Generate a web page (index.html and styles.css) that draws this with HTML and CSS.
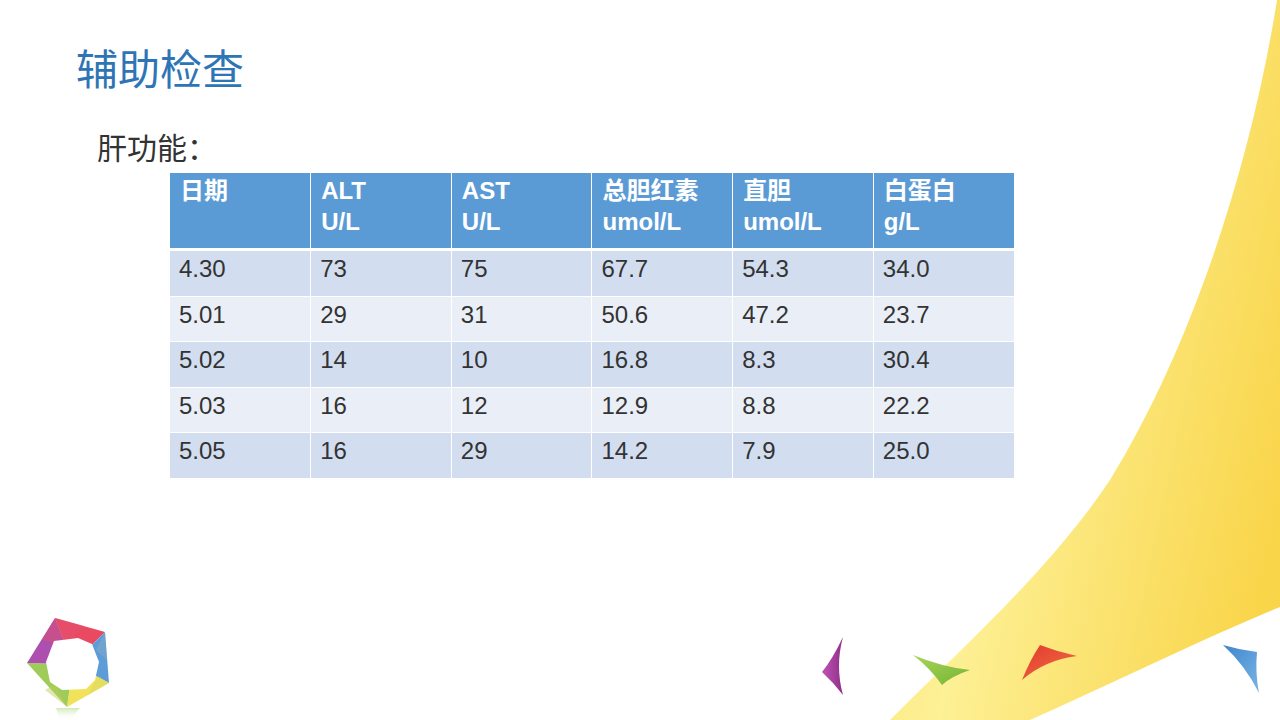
FILE: index.html
```html
<!DOCTYPE html>
<html lang="zh-CN">
<head>
<meta charset="utf-8">
<title>辅助检查</title>
<link rel="stylesheet" href="styles.css">
</head>
<body>
<div class="slide">
  <svg class="deco" width="1280" height="720" viewBox="0 0 1280 720" aria-hidden="true">
    <defs>
      <linearGradient id="sun" x1="0" y1="0.3" x2="1" y2="0.7">
        <stop offset="0" stop-color="#fbe777"/>
        <stop offset="0.35" stop-color="#fdf095"/>
        <stop offset="1" stop-color="#f9d54a"/>
      </linearGradient>
      <linearGradient id="purp" x1="0" y1="0" x2="1" y2="0">
        <stop offset="0" stop-color="#c054b4"/>
        <stop offset="1" stop-color="#8e2f8a"/>
      </linearGradient>
      <linearGradient id="grn" x1="0" y1="0" x2="1" y2="1">
        <stop offset="0" stop-color="#a8d45a"/>
        <stop offset="1" stop-color="#76b534"/>
      </linearGradient>
      <linearGradient id="red" x1="0" y1="0" x2="1" y2="1">
        <stop offset="0" stop-color="#e23a2a"/>
        <stop offset="1" stop-color="#f0704a"/>
      </linearGradient>
      <linearGradient id="blu" x1="0" y1="0" x2="1" y2="1">
        <stop offset="0" stop-color="#3f86cc"/>
        <stop offset="1" stop-color="#7ab4e6"/>
      </linearGradient>
      <linearGradient id="refl" x1="0" y1="0" x2="0" y2="1">
        <stop offset="0" stop-color="#b5d98a" stop-opacity="0.6"/>
        <stop offset="1" stop-color="#ffffff" stop-opacity="0"/>
      </linearGradient>
      <filter id="soft" x="-10%" y="-10%" width="120%" height="120%">
        <feGaussianBlur stdDeviation="0.6"/>
      </filter>
    </defs>
    <path d="M1277,0 C1250,170 1190,350 1110,480 C1050,570 960,650 890,720 L1030,720 C1120,680 1200,640 1280,607 L1280,0 Z" fill="url(#sun)"/>
    <path d="M843,637 Q832,660 822,672 Q833,682 843,695 Q835,666 843,637 Z" fill="url(#purp)"/>
    <path d="M913,655 Q942,667 970,670 Q952,676 942,685 Q930,668 913,655 Z" fill="url(#grn)"/>
    <path d="M1022,680 Q1030,660 1040,645 Q1058,652 1077,656 Q1045,660 1022,680 Z" fill="url(#red)"/>
    <path d="M1223,645 Q1240,650 1257,652 Q1255,672 1259,693 Q1245,665 1223,645 Z" fill="url(#blu)"/>

    <g class="logo" filter="url(#soft)">
      <polygon points="73,664 55,618 105,632" fill="#ea4a62"/>
      <polygon points="73,664 105,632 109,683" fill="#5d9cd6"/>
      <polygon points="73,664 109,683 67,707" fill="#f2e25a"/>
      <polygon points="73,664 67,707 27,663" fill="#9fcc58"/>
      <polygon points="73,664 27,663 55,618" fill="#ad4fae"/>
      <polygon points="55,618 84,626 66,646 42,640" fill="#e0506c" opacity="0.5"/>
      <polygon points="105,632 107,660 96,650" fill="#88b0c8" opacity="0.45"/>
      <polygon points="109,683 88,695 98,676" fill="#d0da66" opacity="0.45"/>
      <polygon points="67,707 45,690 55,684" fill="#b8cc58" opacity="0.45"/>
      <polygon points="54,641 78,638 92,644 99,662 95,680 86,689 62,690 50,682 46,662" fill="#ffffff"/>
    </g>
    <polygon points="56,708 80,708 70,720 60,720" fill="url(#refl)"/>
  </svg>

  <h1 class="title">辅助检查</h1>
  <p class="subtitle">肝功能：</p>

  <table class="lab">
    <thead>
      <tr>
        <th>日期</th>
        <th>ALT<br>U/L</th>
        <th>AST<br>U/L</th>
        <th>总胆红素<br>umol/L</th>
        <th>直胆<br>umol/L</th>
        <th>白蛋白<br>g/L</th>
      </tr>
    </thead>
    <tbody>
      <tr><td>4.30</td><td>73</td><td>75</td><td>67.7</td><td>54.3</td><td>34.0</td></tr>
      <tr><td>5.01</td><td>29</td><td>31</td><td>50.6</td><td>47.2</td><td>23.7</td></tr>
      <tr><td>5.02</td><td>14</td><td>10</td><td>16.8</td><td>8.3</td><td>30.4</td></tr>
      <tr><td>5.03</td><td>16</td><td>12</td><td>12.9</td><td>8.8</td><td>22.2</td></tr>
      <tr><td>5.05</td><td>16</td><td>29</td><td>14.2</td><td>7.9</td><td>25.0</td></tr>
    </tbody>
  </table>
</div>
</body>
</html>
```

FILE: styles.css
```css
html, body {
  margin: 0;
  padding: 0;
  background: #ffffff;
}

.slide {
  position: relative;
  width: 1280px;
  height: 720px;
  overflow: hidden;
  box-sizing: border-box;
  padding: 47px 0 0 76px;
  font-family: "Liberation Sans", "Noto Sans CJK SC", sans-serif;
  color: #2b2b2b;
}

.deco {
  position: absolute;
  left: 0;
  top: 0;
  z-index: 0;
}

.title,
.subtitle,
.lab {
  position: relative;
  z-index: 1;
}

.title {
  margin: 0;
  font-size: 42px;
  line-height: 48px;
  font-weight: normal;
  color: #2e75b6;
}

.subtitle {
  margin: 36px 0 0 21px;
  font-size: 30px;
  line-height: 36px;
  color: #333333;
}

.lab {
  margin: 6px 0 0 94px;
  width: 844px;
  table-layout: fixed;
  border-collapse: collapse;
  font-size: 24px;
}

.lab th,
.lab td {
  text-align: left;
  vertical-align: top;
  border-left: 1px solid #ffffff;
  border-top: 1px solid #ffffff;
}

.lab th:first-child,
.lab td:first-child {
  border-left: none;
}

.lab th {
  background: #5b9bd5;
  color: #ffffff;
  font-weight: bold;
  line-height: 31px;
  height: 62px;
  padding: 2px 8px 11px 10px;
  border-top: none;
  border-bottom: 3px solid #ffffff;
}

.lab td {
  line-height: 29px;
  height: 29px;
  padding: 3px 8px 12.5px 9px;
  color: #333333;
}

.lab tbody tr:nth-child(odd) td {
  background: #d2deef;
}

.lab tbody tr:nth-child(even) td {
  background: #eaeff7;
}

.lab tbody tr:first-child td {
  border-top: none;
}
```
